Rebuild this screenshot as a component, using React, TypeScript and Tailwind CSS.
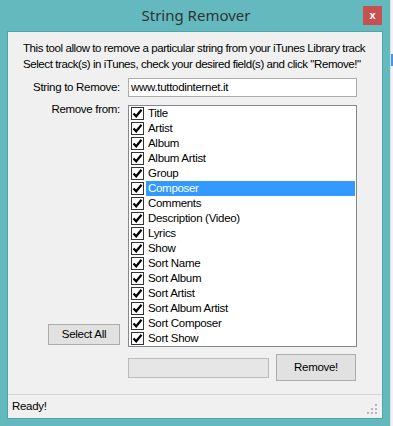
import React from "react";

const fields = [
  "Title",
  "Artist",
  "Album",
  "Album Artist",
  "Group",
  "Composer",
  "Comments",
  "Description (Video)",
  "Lyrics",
  "Show",
  "Sort Name",
  "Sort Album",
  "Sort Artist",
  "Sort Album Artist",
  "Sort Composer",
  "Sort Show",
];

function CheckBox() {
  return (
    <span className="w-[13px] h-[13px] border border-[#333] bg-white flex items-center justify-center shrink-0">
      <svg width="11" height="11" viewBox="0 0 11 11">
        <path d="M1.5 5.5 L4.2 8.3 L9.5 1.8" fill="none" stroke="#000" strokeWidth="2.2" />
      </svg>
    </span>
  );
}

export default function App() {
  return (
    <div
      className="w-[393px] h-[426px] bg-[#f3f3f3] overflow-hidden text-[11.5px] tracking-[-0.3px] text-black whitespace-nowrap flex"
      style={{ fontFamily: '"Liberation Sans", Arial, sans-serif' }}
    >
      <div className="w-[390px] h-[426px] shrink-0 bg-[#63b9be] flex flex-col px-[7px] pb-[7px]">
        {/* title bar */}
        <div className="h-[31px] flex items-center relative shrink-0">
          <div
            className="flex-1 text-center text-[15px] tracking-normal text-[#333] pl-[2px]"
            style={{ fontFamily: '"Noto Sans", "Open Sans", sans-serif' }}
          >
            String Remover
          </div>
          <div className="absolute right-[1px] top-[6px] w-[19px] h-[19px] bg-[#c75050] flex items-center justify-center text-white text-[11px] tracking-normal font-bold leading-none">
            x
          </div>
        </div>

        {/* client area */}
        <div className="flex-1 border border-[#4fa5aa] bg-[#f0f0f0] flex flex-col">
          <div className="flex-1 flex flex-col pt-[8px]">
            <div className="pl-[15px] leading-[16px] tracking-[-0.42px]">
              <div>This tool allow to remove a particular string from your iTunes Library track</div>
              <div>Select track(s) in iTunes, check your desired field(s) and click "Remove!"</div>
            </div>

            <div className="flex items-center mt-[6px]">
              <div className="w-[120px] pr-[8px] text-right">String to Remove:</div>
              <div className="w-[229px] h-[19px] border border-[#acacac] bg-white flex items-center px-[2px]">
                www.tuttodinternet.it
              </div>
            </div>

            <div className="flex mt-[8px]">
              <div className="w-[120px] flex flex-col items-end pr-[8px]">
                <div className="mt-[-4px]">Remove from:</div>
                <div className="flex-1" />
                <div className="w-[72px] h-[21px] border border-[#adadad] bg-[#e1e1e1] flex items-center justify-center mb-[2px]">
                  Select All
                </div>
              </div>
              <div className="w-[229px] h-[242px] border border-[#828790] bg-white pl-[2px] pr-[1px]">
                {fields.map((f) => (
                  <div key={f} className="h-[15px] flex items-center">
                    <CheckBox />
                    <span
                      className={
                        f === "Composer"
                          ? "ml-[2px] flex-1 h-[15px] bg-[#3399ff] text-white pl-[2px] flex items-center"
                          : "ml-[2px] pl-[2px] flex items-center"
                      }
                    >
                      {f}
                    </span>
                  </div>
                ))}
              </div>
            </div>

            <div className="flex items-center mt-[7px] pl-[120px]">
              <div className="w-[141px] h-[20px] border border-[#bcbcbc] bg-[#e6e6e6] mt-[1px]" />
              <div className="ml-[7px] w-[80px] h-[27px] border border-[#adadad] bg-[#e1e1e1] flex items-center justify-center">
                Remove!
              </div>
            </div>
          </div>

          {/* status bar */}
          <div className="h-[24px] border-t border-[#d7d7d7] flex items-center justify-between pl-[4px] pr-[3px] shrink-0">
            <span>Ready!</span>
            <svg width="12" height="12" viewBox="0 0 12 12" className="self-end mb-[2px]">
              <rect x="8" y="0" width="2" height="2" fill="#b8b8b8" />
              <rect x="4" y="4" width="2" height="2" fill="#b8b8b8" />
              <rect x="8" y="4" width="2" height="2" fill="#b8b8b8" />
              <rect x="0" y="8" width="2" height="2" fill="#b8b8b8" />
              <rect x="4" y="8" width="2" height="2" fill="#b8b8b8" />
              <rect x="8" y="8" width="2" height="2" fill="#b8b8b8" />
            </svg>
          </div>
        </div>
      </div>
      {/* sliver of the window behind */}
      <div className="flex-1 flex flex-col border-l border-[#e0e0e0]">
        <div className="h-[54px]" />
        <div className="h-[12px] bg-[#3399ff]" />
        <div className="flex-1" />
      </div>
    </div>
  );
}
